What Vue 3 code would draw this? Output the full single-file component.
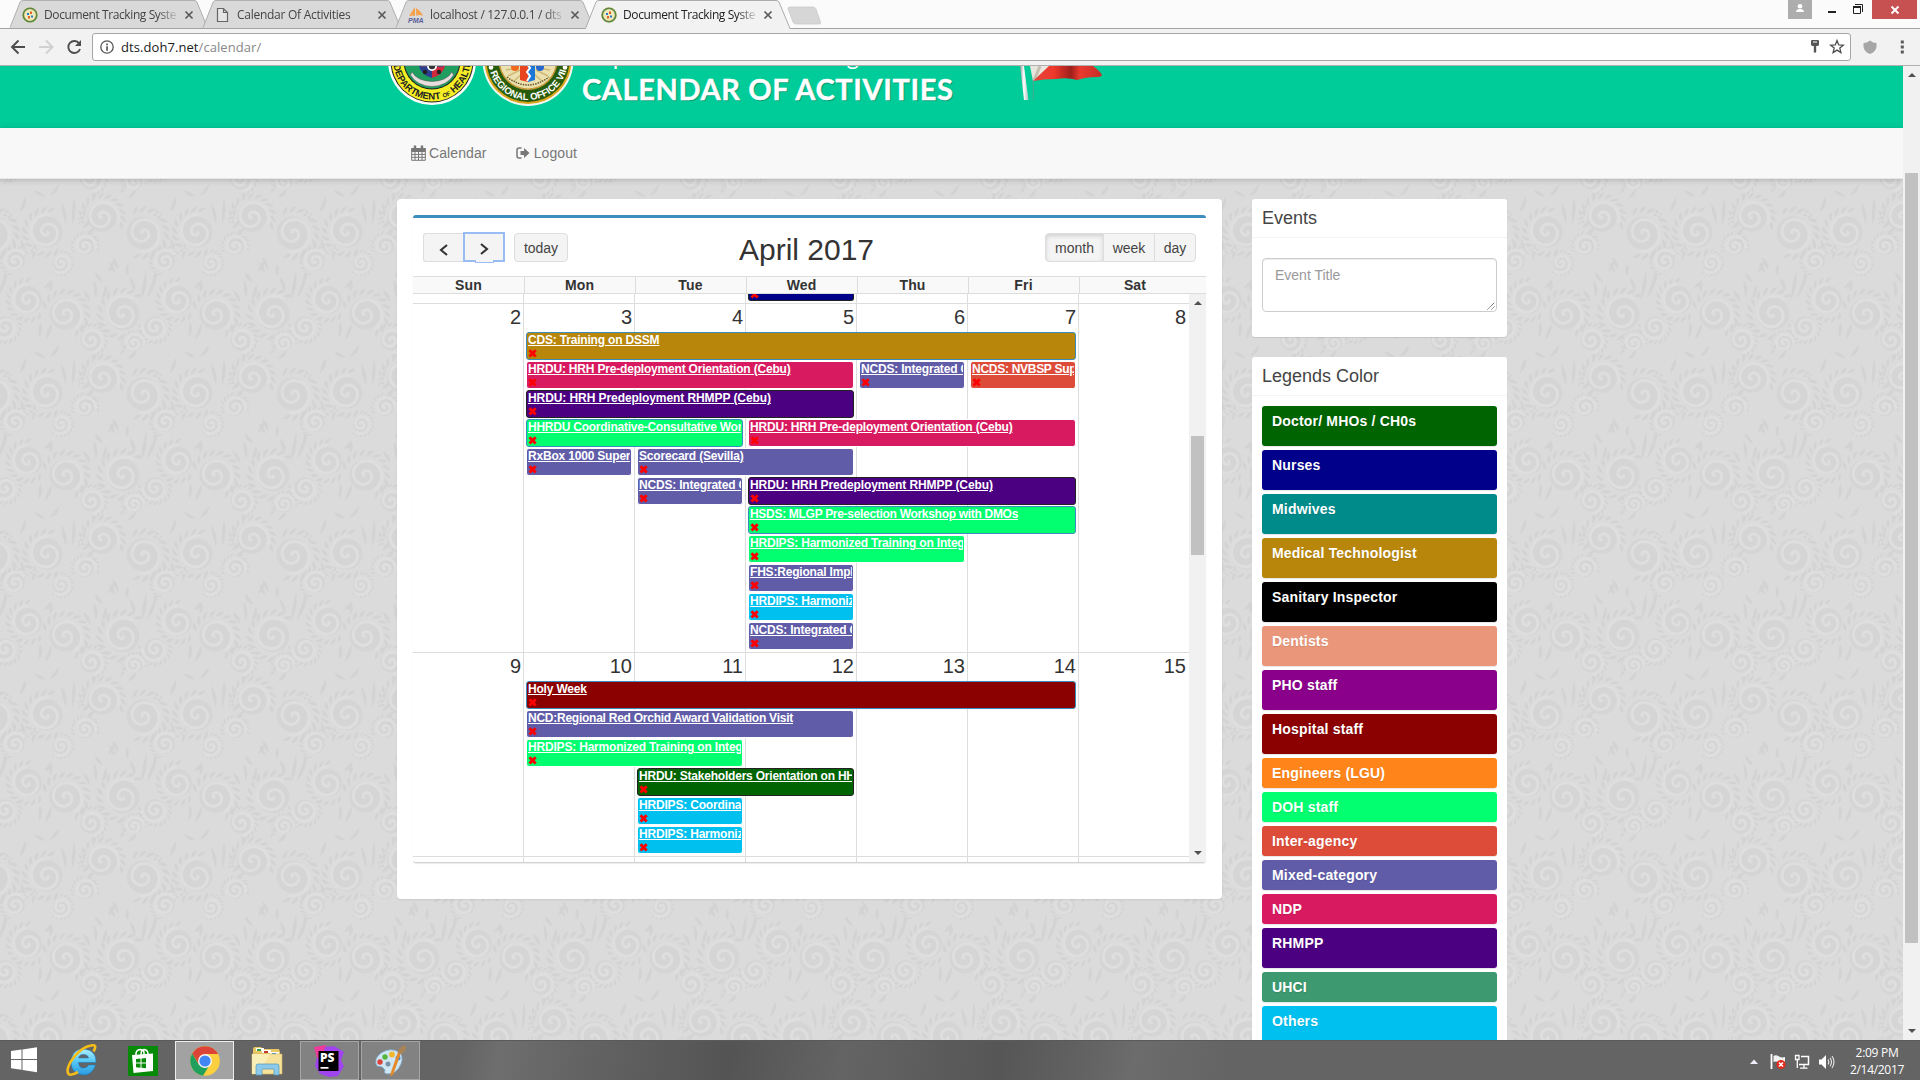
<script setup>
const tabs = [
  { title: 'Document Tracking Syste', icon: 'seal', ls: -0.4 },
  { title: 'Calendar Of Activities', icon: 'page', ls: -0.27 },
  { title: 'localhost / 127.0.0.1 / dts', icon: 'pma', ls: -0.3 },
  { title: 'Document Tracking Syste', icon: 'seal', ls: -0.4, active: true },
]

const days = ['Sun', 'Mon', 'Tue', 'Wed', 'Thu', 'Fri', 'Sat']

const BLUE = '#3c8dbc'
const DARK = '#222222'
const GOLD = '#b8860b'
const PINK = '#d81b60'
const INDIGO = '#4b0082'
const GREEN = '#01ff70'
const PURPLE = '#605ca8'
const RED = '#dd4b39'
const AQUA = '#00c0ef'

// from/to are day columns (0 = Sunday), "to" is exclusive; ls is the title's letter spacing
const weeks = [
  {
    dates: [2, 3, 4, 5, 6, 7, 8],
    height: 348,
    events: [
      { row: 1, from: 1, to: 6, bg: GOLD, border: BLUE, title: 'CDS: Training on DSSM' },
      { row: 2, from: 1, to: 4, bg: PINK, title: 'HRDU: HRH Pre-deployment Orientation (Cebu)' },
      { row: 2, from: 4, to: 5, bg: PURPLE, title: 'NCDS: Integrated C' },
      { row: 2, from: 5, to: 6, bg: RED, title: 'NCDS: NVBSP Sup', ls: -0.28 },
      { row: 3, from: 1, to: 4, bg: INDIGO, border: DARK, title: 'HRDU: HRH Predeployment RHMPP (Cebu)', ls: -0.08 },
      { row: 4, from: 1, to: 3, bg: GREEN, border: BLUE, title: 'HHRDU Coordinative-Consultative Wor', ls: -0.24 },
      { row: 4, from: 3, to: 6, bg: PINK, title: 'HRDU: HRH Pre-deployment Orientation (Cebu)' },
      { row: 5, from: 1, to: 2, bg: PURPLE, title: 'RxBox 1000 Super' },
      { row: 5, from: 2, to: 4, bg: PURPLE, title: 'Scorecard (Sevilla)' },
      { row: 6, from: 2, to: 3, bg: PURPLE, title: 'NCDS: Integrated C' },
      { row: 6, from: 3, to: 6, bg: INDIGO, border: DARK, title: 'HRDU: HRH Predeployment RHMPP (Cebu)', ls: -0.08 },
      { row: 7, from: 3, to: 6, bg: GREEN, border: BLUE, title: 'HSDS: MLGP Pre-selection Workshop with DMOs', ls: -0.3 },
      { row: 8, from: 3, to: 5, bg: GREEN, title: 'HRDIPS: Harmonized Training on Integ' },
      { row: 9, from: 3, to: 4, bg: PURPLE, title: 'FHS:Regional Impl' },
      { row: 10, from: 3, to: 4, bg: AQUA, title: 'HRDIPS: Harmoniz' },
      { row: 11, from: 3, to: 4, bg: PURPLE, title: 'NCDS: Integrated C' },
    ],
  },
  {
    dates: [9, 10, 11, 12, 13, 14, 15],
    height: 203,
    events: [
      { row: 1, from: 1, to: 6, bg: '#8b0000', border: BLUE, title: 'Holy Week' },
      { row: 2, from: 1, to: 4, bg: PURPLE, title: 'NCD:Regional Red Orchid Award Validation Visit', ls: -0.25 },
      { row: 3, from: 1, to: 3, bg: GREEN, title: 'HRDIPS: Harmonized Training on Integ' },
      { row: 4, from: 2, to: 4, bg: '#006400', border: DARK, title: 'HRDU: Stakeholders Orientation on HH', ls: -0.21 },
      { row: 5, from: 2, to: 3, bg: AQUA, title: 'HRDIPS: Coordina' },
      { row: 6, from: 2, to: 3, bg: AQUA, title: 'HRDIPS: Harmoniz' },
    ],
  },
]

const legends = [
  { name: 'Doctor/ MHOs / CH0s', bg: '#006400', tall: true },
  { name: 'Nurses', bg: '#00008b', tall: true },
  { name: 'Midwives', bg: '#008b8b', tall: true },
  { name: 'Medical Technologist', bg: GOLD, tall: true },
  { name: 'Sanitary Inspector', bg: '#000000', tall: true },
  { name: 'Dentists', bg: '#e9967a', tall: true },
  { name: 'PHO staff', bg: '#8b008b', tall: true },
  { name: 'Hospital staff', bg: '#8b0000', tall: true },
  { name: 'Engineers (LGU)', bg: '#ff851b' },
  { name: 'DOH staff', bg: GREEN },
  { name: 'Inter-agency', bg: RED },
  { name: 'Mixed-category', bg: PURPLE },
  { name: 'NDP', bg: PINK },
  { name: 'RHMPP', bg: INDIGO, tall: true },
  { name: 'UHCI', bg: '#3d9970' },
  { name: 'Others', bg: AQUA, tall: true },
]

// ---- wallpaper ornament: one 150x161 tile of spirals and leaves ----
const TW = 150
const TH = 161
const curls = [
  [47, 52, 19, 0.4], [102, 37, 18, 2.2], [143, 53, 20, 3.6], [15, 81, 12, 1.2], [61, 83, 10, 4],
  [28, 120, 17, 0.2], [65, 134, 19, 2.8], [123, 134, 20, 0.9], [91, 160, 13, 3.2], [134, 163, 10, 1.8],
  [5, 147, 13, 5], [85, 66, 11, 2],
]
const f = (n) => n.toFixed(1)
function spiral(x, y, R, a0) {
  let d = ''
  for (let i = 0; i <= 44; i++) {
    const t = i / 44
    const a = a0 + t * Math.PI * 3.4
    const r = 1 + R * t
    d += (i ? 'L' : 'M') + f(x + r * Math.cos(a)) + ' ' + f(y + r * Math.sin(a))
  }
  return d
}
function petal(x, y, R, a) {
  const p = (r, b) => f(x + r * Math.cos(b)) + ' ' + f(y + r * Math.sin(b))
  return `M${p(R, a)}Q${p(R * 1.3, a + 0.04)} ${p(R * 1.36, a + 0.3)}Q${p(R * 1.14, a + 0.3)} ${p(R, a)}Z`
}
function blade(x, y, l, a) {
  const c = Math.cos(a)
  const s = Math.sin(a)
  const ex = x + l * c
  const ey = y + l * s
  const mx = x + (l / 2) * c
  const my = y + (l / 2) * s
  return `M${f(x)} ${f(y)}Q${f(mx - 5 * s)} ${f(my + 5 * c)} ${f(ex)} ${f(ey)}Q${f(mx + 2 * s)} ${f(my - 2 * c)} ${f(x)} ${f(y)}Z`
}
const blades = [
  [72, 45, 28, -1.5], [78, 46, 24, -1.2], [66, 44, 22, -1.8], [84, 62, 15, -0.4], [84, 55, 13, -0.6], [82, 48, 12, -0.8],
  [25, 78, 20, -1.8], [32, 80, 17, -1.4], [20, 32, 16, -1.2], [10, 40, 12, -2], [141, 120, 30, -1.4], [147, 118, 26, -1.2],
  [135, 112, 16, -1.9], [96, 118, 18, -1.7], [102, 120, 16, -1.3], [90, 122, 14, -2.1], [108, 92, 13, -1.1], [118, 90, 14, -2],
  [44, 108, 12, -0.8], [50, 112, 12, -1.5], [3, 105, 16, -1.4], [39, 158, 16, -1.5], [45, 160, 18, -1.2], [110, 82, 12, 1.1],
  [128, 84, 12, 1.6], [95, 92, 13, 0.9], [120, 14, 16, -1.1], [128, 18, 12, -0.8], [34, 10, 13, 0.5], [50, 16, 15, -0.9],
]
const blobs = []
let spiralPath = ''
let leafPath = ''
for (const ox of [-TW, 0, TW]) {
  for (const oy of [-TH, 0, TH]) {
    for (const [x, y, R, a] of curls) {
      const X = x + ox
      const Y = y + oy
      if (X < -35 || X > TW + 35 || Y < -35 || Y > TH + 35) continue
      blobs.push([X, Y, R * 0.82])
      spiralPath += spiral(X, Y, R * 0.9, a)
      for (let k = 0; k < 12; k++) leafPath += petal(X, Y, R, a + 0.6 + k * 0.34)
    }
    for (const [x, y, l, a] of blades) leafPath += blade(x + ox, y + oy, l, a)
  }
}
</script>

<template>
  <div class="screen">
    <!-- browser chrome -->
    <div class="tabstrip">
      <div v-for="(t, i) in tabs" :key="i" class="tab" :class="{ active: t.active }">
        <svg class="tabshape" width="206" height="29" viewBox="0 0 206 29">
          <path d="M0.5 29L11 2Q12 .5 14 .5H191Q193 .5 194 2L205 29Z" />
          <path class="edge" d="M0.5 28.5L11 2Q12 .5 14 .5H191Q193 .5 194 2L205 28.5" />
        </svg>
        <svg v-if="t.icon === 'seal'" class="fav" viewBox="0 0 16 16">
          <circle cx="8" cy="8" r="7.8" fill="#d8d48c" />
          <circle cx="8" cy="8" r="6.8" fill="none" stroke="#5c8548" stroke-width="1.600" />
          <circle cx="8" cy="8" r="5.400" fill="#efe9b8" />
          <path d="M5 6h2v2H5zM9 8.500h2v2H9z" fill="#2a78d0" />
          <path d="M8 4.500h2v2.500H8zM6 9h2v2.500H6z" fill="#e0622a" />
        </svg>
        <svg v-else-if="t.icon === 'page'" class="fav" viewBox="0 0 16 16">
          <path d="M2.5 1.5H8.5L12.5 5.5V14.5H2.5ZM8.5 1.5V5.5H12.5" fill="#e6e6e6" stroke="#666" stroke-width="1.2" />
        </svg>
        <svg v-else class="fav" viewBox="0 0 16 16">
          <path d="M7 0L1 9Q5 8 7 9ZM8 1Q8 6 8.500 9Q11 7 15 9Q13 4 8 1Z" fill="#f5a04a" />
          <text x="0" y="15.800" font-size="7" font-weight="bold" font-style="italic" fill="#5a5f9a" font-family="Liberation Sans, sans-serif">PMA</text>
        </svg>
        <span class="tabtitle" :style="{ letterSpacing: t.ls + 'px' }">{{ t.title }}</span>
        <svg class="tabclose" width="10" height="10" viewBox="0 0 10 10"><path d="M1.500 1.500L8.500 8.500M8.500 1.500L1.500 8.500" stroke="#5a5a5a" stroke-width="1.700" /></svg>
      </div>
      <svg class="newtab" width="36" height="19" viewBox="0 0 36 19"><path d="M4 1H27Q29 1 30 3L34.500 16Q35 18 33 18H10Q8 18 7 16L2 3Q1.500 1 4 1Z" fill="#d6d6d6" stroke="#cacaca" stroke-width=".8" /></svg>
      <div class="winctl">
        <span class="user"><svg width="24" height="19" viewBox="0 0 24 19"><circle cx="12" cy="6.300" r="2.300" fill="#fff" /><path d="M8 12Q8 9 12 9Q16 9 16 12Z" fill="#fff" /></svg></span>
        <svg class="minmax" width="60" height="19" viewBox="0 0 60 19">
          <path d="M16 11h8v2h-8z" fill="#222" />
          <path d="M41.500 6.500h7v7h-7z" fill="none" stroke="#222" /><path d="M41 6h8v2h-8z" fill="#222" /><path d="M43 4.500h7.500V12" fill="none" stroke="#222" />
        </svg>
        <span class="close"><svg width="10" height="10" viewBox="0 0 10 10"><path d="M1.500 1.500L8.500 8.500M8.500 1.500L1.500 8.500" stroke="#fff" stroke-width="1.900" /></svg></span>
      </div>
    </div>
    <div class="toolbar">
      <svg class="navicons" width="92" height="36" viewBox="0 0 92 36" fill="none" stroke-width="1.900">
        <path d="M25 18H12M18.500 11.500L12 18L18.500 24.500" stroke="#4d4d4d" />
        <path d="M39 18H52M46 11.500L52.500 18L46 24.500" stroke="#d0d0d0" />
        <path d="M79.200 14.500A6 6 0 1 0 80 20" stroke="#4d4d4d" />
        <path d="M81 11V17H75Z" fill="#4d4d4d" />
      </svg>
      <div class="omnibox">
        <svg width="16" height="16" viewBox="0 0 16 16"><circle cx="8" cy="8" r="6.200" fill="none" stroke="#555" stroke-width="1.300" /><path d="M7.200 4.500h1.700v1.700H7.200zM7.200 7.200h1.700v4.500H7.200z" fill="#555" /></svg>
        <span class="url">dts.doh7.net<i>/calendar/</i></span>
        <svg class="omniright" width="40" height="18" viewBox="0 0 40 18">
          <path d="M2 3Q2 2 3 2H9Q10 2 10 3V6.500Q10 8 8 8H7.200V14L6 15L4.800 14V8H4Q2 8 2 6.500Z" fill="#555" /><path d="M4 3.500h4v1H4z" fill="#fff" />
          <path d="M28 2.600L29.700 6.900L34.300 7.200L30.800 10.100L31.900 14.600L28 12.100L24.100 14.600L25.200 10.100L21.700 7.200L26.300 6.900Z" fill="none" stroke="#4d4d4d" stroke-width="1.300" />
        </svg>
      </div>
      <svg width="69" height="36" viewBox="0 0 69 36">
        <path d="M19 11.500Q16 14 12.500 14V18Q13 22.500 19 25Q25 22.500 25.500 18V14Q22 14 19 11.500Z" fill="#a6a6a6" />
        <path d="M49.800 11.500h3v3h-3zM49.800 16.500h3v3h-3zM49.800 21.500h3v3h-3z" fill="#5a5a5a" />
      </svg>
    </div>

    <!-- page -->
    <div class="viewport">
      <div class="page">
        <svg class="wallpaper" width="1903" height="974">
          <defs>
            <pattern id="orn" x="0" y="114" width="150" height="161" patternUnits="userSpaceOnUse">
              <circle v-for="(b, i) in blobs" :key="i" :cx="b[0]" :cy="b[1]" :r="b[2]" fill="#d2d2d2" opacity=".75" />
              <path :d="leafPath" fill="#d0d0d0" opacity=".75" />
              <path :d="spiralPath" fill="none" stroke="#dedede" stroke-width="3" stroke-linecap="round" />
            </pattern>
          </defs>
          <rect width="1903" height="974" fill="#dbdbdb" />
          <rect width="1903" height="974" fill="url(#orn)" />
        </svg>

        <header class="banner">
          <svg class="seals" width="194" height="62" viewBox="386 66 194 62">
            <defs>
              <path id="arcA" d="M393.500 61A38.500 38.500 0 0 0 470.500 61" />
              <path id="arcB" d="M488.500 60.500A39.500 39.500 0 0 0 567.500 60.500" />
            </defs>
            <circle cx="432" cy="61" r="44" fill="#fff" />
            <circle cx="432" cy="61" r="41.500" fill="#222" />
            <circle cx="432" cy="61" r="40.500" fill="#f6ee25" />
            <circle cx="432" cy="61" r="28.500" fill="#222" />
            <circle cx="432" cy="61" r="27.500" fill="#1f9e60" />
            <path d="M419 60H432V78Q421 75 419 66Z" fill="#2a3f8f" />
            <path d="M432 60H445V66Q443 75 432 78Z" fill="#cf2a3c" />
            <path d="M421 60H443V67H421Z" fill="#5a4a7a" />
            <circle cx="432" cy="66" r="5" fill="#fff" /><circle cx="432" cy="66" r="3.200" fill="#333" />
            <circle cx="425" cy="72" r="2.200" fill="#222" /><circle cx="439" cy="72" r="2.200" fill="#222" />
            <path d="M412 72Q417 81 432 81.500Q447 81 452 72L453.500 75Q447 86 432 86.500Q417 86 410.500 75Z" fill="#e8dede" stroke="#555" stroke-width=".5" />
            <text class="sealtext" font-size="9.500" fill="#222"><textPath href="#arcA" startOffset="4">DEPARTMENT <tspan font-size="6">OF</tspan> HEALTH</textPath></text>

            <circle cx="528" cy="60.500" r="45.500" fill="#f2f7f2" />
            <circle cx="528" cy="60.500" r="43.500" fill="#d8a51c" />
            <circle cx="528" cy="60.500" r="41.500" fill="#275c0a" />
            <circle cx="528" cy="60.500" r="29.500" fill="#c49a3c" />
            <circle cx="528" cy="60.500" r="28" fill="#ece0ae" />
            <path d="M506 70L518 68M508 76L520 70M514 81L522 74M550 70L538 68M548 76L536 70M542 81L534 74" stroke="#cdb878" stroke-width="1.500" />
            <circle cx="515" cy="67" r="4" fill="#f26a20" /><circle cx="540" cy="67" r="4" fill="#2467cf" />
            <path d="M520 60H528V82L520 80Z" fill="#e8441e" /><path d="M528 60H535V80L528 82Z" fill="#1c78d8" />
            <path d="M527 64l3 4l-3 4l3 4l-3 5" fill="none" stroke="#fff" stroke-width="2" />
            <path d="M507 77Q528 93 549 77" fill="none" stroke="#6a5a30" stroke-width="1.500" stroke-dasharray="1.500 1" />
            <circle cx="491" cy="67.500" r="2.300" fill="#fff" /><circle cx="565" cy="67.500" r="2.300" fill="#fff" />
            <text class="sealtext" font-size="9.500" fill="#fff"><textPath href="#arcB" startOffset="12">REGIONAL OFFICE VII</textPath></text>
          </svg>
          <div class="bantext">
            <span class="dept">Department of Health Regional Office VII</span>
            <span class="cal">CALENDAR OF ACTIVITIES</span>
          </div>
          <svg class="flag" width="90" height="36" viewBox="0 0 90 36">
            <defs>
              <linearGradient id="pole" x1="0" x2="1"><stop offset="0" stop-color="#8b9a98" /><stop offset=".45" stop-color="#fff" /><stop offset="1" stop-color="#a8bdb8" /></linearGradient>
              <linearGradient id="cloth" x1="0" x2="1"><stop offset="0" stop-color="#e2463c" /><stop offset=".3" stop-color="#f0382c" /><stop offset=".55" stop-color="#9e1f1a" /><stop offset=".68" stop-color="#ea3a2e" /><stop offset="1" stop-color="#c22f28" /></linearGradient>
            </defs>
            <path d="M7 0H11L15.500 34H11Z" fill="url(#pole)" transform="translate(-7 0)" />
            <path d="M11 0L13 15Q14 25 13 34" fill="none" stroke="#3fae90" stroke-width="1.200" />
            <path d="M10 0H31L13 15Z" fill="#e9e6e0" />
            <path d="M20 0Q17 8 14 14" fill="none" stroke="#c4bfae" stroke-width="3" />
            <path d="M29 0H73Q80 5 82 9Q81 11 77 11Q66 11 57 14Q48 11 36 13Q24 13 13 15Z" fill="url(#cloth)" />
          </svg>
        </header>

        <nav class="menu">
          <svg width="15" height="16" viewBox="0 0 15 16" fill="none" stroke="#777"><path d="M.7 3.500H14.300V15.300H.7ZM.7 6.500H14.300M.7 9.400H14.300M.7 12.300H14.300M4 6.500V15M7.500 6.500V15M11 6.500V15" stroke-width="1" /><path d="M.5 3h14v3h-14z" fill="#777" stroke="none" /><path d="M4 .5V4M11 .5V4" stroke-width="2.400" /></svg>
          <span class="m1">Calendar</span>
          <svg width="14" height="12" viewBox="0 0 14 12"><path d="M5.500 1H3Q1 1 1 3V9Q1 11 3 11H5.500" fill="none" stroke="#777" stroke-width="1.500" /><path d="M4.500 4H8V1L13.500 6L8 11V8H4.500Z" fill="#777" /></svg>
          <span class="m2">Logout</span>
        </nav>

        <main class="content">
          <section class="panel">
            <div class="calbox">
              <div class="calhead">
                <div class="group nav">
                  <span class="btn prev"><svg width="10" height="12" viewBox="0 0 10 12"><path d="M8 1L2 6L8 11" fill="none" stroke="#333" stroke-width="2.100" /></svg></span>
                  <span class="btn next"><svg width="10" height="12" viewBox="0 0 10 12"><path d="M2 1L8 6L2 11" fill="none" stroke="#333" stroke-width="2.100" /></svg><i class="notch"></i></span>
                  <span class="btn today">today</span>
                </div>
                <h2>April 2017</h2>
                <div class="group views">
                  <span class="btn month">month</span><span class="btn week">week</span><span class="btn day">day</span>
                </div>
              </div>
              <div class="dayhead"><span v-for="d in days" :key="d">{{ d }}</span></div>
              <div class="calbody">
                <div class="weeks">
                  <div class="wk tail"><div class="evt tailevt"><svg class="x" width="10" height="9" viewBox="0 0 10 9"><path d="M1.500 1.200L7.700 7.500M7.700 1.200L1.500 7.500" stroke="#f00" stroke-width="2.900" /></svg></div></div>
                  <div v-for="(w, wi) in weeks" :key="wi" class="wk" :style="{ height: w.height + 'px' }">
                    <div class="dates"><span v-for="d in w.dates" :key="d">{{ d }}</span></div>
                    <div class="events">
                      <div
                        v-for="(e, ei) in w.events"
                        :key="ei"
                        class="evt"
                        :style="{ gridRow: e.row, gridColumn: `${e.from + 1} / ${e.to + 1}`, background: e.bg, borderColor: e.border || '#fff' }"
                      >
                        <a :style="{ letterSpacing: (e.ls ?? -0.19) + 'px' }">{{ e.title }}</a>
                        <svg class="x" width="10" height="9" viewBox="0 0 10 9"><path d="M1.500 1.200L7.700 7.500M7.700 1.200L1.500 7.500" stroke="#f00" stroke-width="2.900" /></svg>
                      </div>
                    </div>
                  </div>
                  <div class="wk last"></div>
                </div>
                <div class="sbar inner">
                  <i class="up"></i><b></b><i class="down"></i>
                </div>
              </div>
            </div>
          </section>

          <aside class="side">
            <section class="card ev">
              <h3>Events</h3>
              <div class="ta">Event Title
                <svg width="8" height="8" viewBox="0 0 8 8"><path d="M.5 7.500L7.500 .5M4.500 7.500L7.500 4.500" stroke="#555" stroke-width="1" stroke-dasharray="1.200 .4" /></svg>
              </div>
            </section>
            <section class="card lg">
              <h3>Legends Color</h3>
              <div class="legend">
                <div v-for="l in legends" :key="l.name" class="li" :class="{ tall: l.tall }" :style="{ background: l.bg }">{{ l.name }}</div>
              </div>
            </section>
          </aside>
        </main>
      </div>
      <div class="sbar outer"><i class="up"></i><b></b><i class="down"></i></div>
    </div>

    <!-- taskbar -->
    <footer class="taskbar">
      <svg class="ti start" width="28" height="28" viewBox="0 0 28 28"><path d="M1 4L11.500 2.500V12H1ZM12.500 2.400L27 .3V12H12.500ZM1 13H11.500V22.700L1 21.200ZM12.500 13H27V25.200L12.500 23Z" fill="#fff" /></svg>
      <svg class="ti ie" width="34" height="34" viewBox="0 0 34 34">
        <defs><linearGradient id="ieb" x1="0" y1="0" x2="0" y2="1"><stop offset="0" stop-color="#aef0ff" /><stop offset=".5" stop-color="#52c6f5" /><stop offset="1" stop-color="#2a9ae0" /></linearGradient></defs>
        <path d="M31 18.500H13.500Q14 24 18.500 24Q22 24 23.500 21H30.500Q27.500 31 18 31Q6 29.500 6 18Q7 5 18.500 5Q31.500 6 31 18.500ZM13.700 14H23.500Q23 10.500 18.500 10.500Q14 10.500 13.700 14Z" fill="url(#ieb)" stroke="#1e78b8" stroke-width=".6" />
        <path d="M28.500 7.500Q33 0 26 1.500Q17 3 9 13Q0 25 3.500 30Q6 32 13 28" fill="none" stroke="#f4bd18" stroke-width="2.600" />
      </svg>
      <svg class="ti store" width="30" height="30" viewBox="0 0 30 30"><path d="M0 0h30v30H0z" fill="#078a07" /><path d="M4 9L25 7.500V25L5.500 27Z" fill="#fff" /><path d="M8 10V7Q9 3.500 12.500 3.500Q16 4 16 7V10M13 9Q13 3.500 16 3.500Q20 4 20 8" fill="none" stroke="#fff" stroke-width="1.500" /><path d="M8 13L12.500 12.600V16.500H8ZM13.500 12.500L18 12V16.500H13.500ZM8 17.500H12.500V21.700L8 21.300ZM13.500 17.500H18V22.200L13.500 21.800Z" fill="#078a07" /></svg>
      <span class="tb on">
        <svg width="30" height="30" viewBox="0 0 30 30"><circle cx="15" cy="15" r="14.800" fill="#fccf3e" /><path d="M15 8H28A14.800 14.800 0 0 0 2.200 7.600L9 18.500Z" fill="#db4437" /><path d="M15 15L8.700 18.500L2.200 7.600A14.800 14.800 0 0 0 13 29.700L19.500 19Z" fill="#1fa15d" /><circle cx="15" cy="15" r="7" fill="#f4f4f4" /><circle cx="15" cy="15" r="5.600" fill="#4285f4" /></svg>
      </span>
      <svg class="ti files" width="34" height="32" viewBox="0 0 34 32">
        <path d="M3 4Q3 2 5 2H11L13 4H29L30 7V28H3Z" fill="#e8c765" /><path d="M6 3h8v3H6z" fill="#fff" /><path d="M7 4h4v2H7z" fill="#3a9a40" /><path d="M12 5h9v3h-9z" fill="#fff" /><path d="M14 6h4v2h-4z" fill="#c0392b" /><path d="M20 7h9v3h-9z" fill="#fff" /><path d="M22 8h4v2h-4z" fill="#2a86d0" />
        <path d="M2 9H32V29H2Z" fill="#f6e29a" stroke="#d8b85a" stroke-width=".6" /><path d="M2 9L20 9L8 29H2Z" fill="#fcf3c4" opacity=".7" />
        <path d="M6 30V21Q6 19 8 19H27Q29 19 29 21V30H24V25Q24 24 23 24H13Q12 24 12 25V30Z" fill="#8cc9ea" stroke="#4d95bd" stroke-width=".7" />
      </svg>
      <span class="tb ps">
        <svg width="34" height="34" viewBox="0 0 34 34"><path d="M12 3L22 2L32 8L29 16L32 22L26 32L17 33L8 30L3 22L5 13Z" fill="#a044f0" /><path d="M2 3L14 1L10 12L5 14Z" fill="#ee3a9a" /><path d="M6.500 7h20v20h-20z" fill="#000" /><text x="8" y="17.800" font-family="Open Sans, sans-serif" font-size="12" font-weight="800" fill="#fff">PS</text><path d="M8.500 23h8v1.700h-8z" fill="#fff" /></svg>
      </span>
      <span class="tb pt">
        <svg width="34" height="34" viewBox="0 0 34 34"><path d="M4 22Q0 15 8 9Q17 3 26 8Q31 12 28 20Q24 30 14 30Q10 29 12 26Q10 22 4 22Z" fill="#cfe6f5" stroke="#7ba9c8" stroke-width=".8" /><circle cx="7" cy="18" r="2.700" fill="#dd4238" /><circle cx="12" cy="13" r="2.700" fill="#58b53c" /><circle cx="19" cy="10.500" r="2.900" fill="#f4b72c" /><circle cx="25" cy="14" r="2.500" fill="#3a8bd8" /><circle cx="15" cy="20" r="2.500" fill="#7a92a4" /><path d="M28 9L20 31L17 32L18 28L25 8Z" fill="#e58a2a" /><path d="M25 9Q24 4 32 1Q35 5 29 10Z" fill="#a98358" /></svg>
      </span>
      <div class="tray">
        <svg width="100" height="20" viewBox="1745 1050 100 20">
          <path d="M1754 1058.500L1758 1063H1750Z" fill="#eef" />
          <path d="M1771.500 1053V1068" stroke="#fff" stroke-width="1.800" /><path d="M1773.500 1055Q1776 1053.500 1779 1055.500Q1782 1057 1785 1056V1062Q1781 1063 1779 1061.500Q1776 1060 1773.500 1061Z" fill="#f2f2f2" />
          <circle cx="1781" cy="1063.500" r="4.600" fill="#e02b1d" /><path d="M1779 1061.500l4 4m0 -4l-4 4" stroke="#fff" stroke-width="1.500" />
          <path d="M1801 1055.500H1808.500V1063.500H1799" fill="none" stroke="#fff" stroke-width="1.500" /><path d="M1795.500 1054.500h3.500v4h-3.500zM1797.300 1058.500V1067M1800 1067.200H1807.500M1804 1064V1067" fill="none" stroke="#fff" stroke-width="1.300" />
          <path d="M1819 1058.500H1821.500L1826 1054V1068L1821.500 1063.500H1819Z" fill="#fff" /><path d="M1828 1058.500Q1829.700 1061 1828 1063.500M1830 1056.700Q1833 1061 1830 1065.300M1832 1055Q1836 1061 1832 1067" fill="none" stroke="#e8e8e8" stroke-width="1.100" />
        </svg>
        <div class="clock"><span>2:09 PM</span><span>2/14/2017</span></div>
      </div>
    </footer>
  </div>
</template>

<style>
body { margin: 0; overflow: hidden; }
</style>

<style scoped>
* { box-sizing: border-box; }
svg { display: block; flex: none; }
.screen { width: 1920px; height: 1080px; display: flex; flex-direction: column; overflow: hidden; font-family: "Liberation Sans", Arial, sans-serif; font-size: 14px; color: #333; }

.tabstrip { height: 29px; flex: none; display: flex; background: #fbfbfb; border-bottom: 1px solid #a3a3a3; padding-left: 6px; font-family: "Open Sans", "Noto Sans", sans-serif; font-size: 12px; }
.tab { position: relative; width: 193px; height: 29px; flex: none; display: flex; align-items: center; padding: 0 0 0 16px; color: #444; }
.tab.active { color: #222; z-index: 2; }
.tabshape { position: absolute; left: 0; top: 0; fill: #d9d9d9; }
.tabshape .edge { fill: none; stroke: #acacac; }
.tab:not(.active) .tabshape { height: 28px; }
.active .tabshape { fill: #f2f2f2; }
.fav { position: relative; width: 16px; height: 16px; margin-right: 6px; margin-top: 1px; }
.tabtitle { position: relative; width: 134px; white-space: nowrap; -webkit-mask-image: linear-gradient(90deg, #000 114px, transparent 136px); mask-image: linear-gradient(90deg, #000 114px, transparent 136px); }
.tabclose { position: relative; margin-left: 6px; margin-top: 1px; }
.newtab { margin: 6px 0 0 8px; }
.winctl { margin-left: auto; display: flex; align-items: flex-start; padding-right: 3px; }
.user { background: #adadad; height: 19px; }
.close { width: 45px; height: 19px; background: #c75050; display: flex; align-items: center; justify-content: center; }

.toolbar { height: 37px; flex: none; background: #f2f2f2; border-bottom: 1px solid #b0b0b0; display: flex; align-items: center; }
.omnibox { flex: 1; height: 28px; border: 1px solid #a6a6a6; border-radius: 3px; background: #fff; display: flex; align-items: center; padding: 0 1px 0 6px; }
.url { font-family: "Open Sans", "Noto Sans", sans-serif; font-size: 13px; color: #1a1a1a; margin-left: 6px; letter-spacing: .07px; line-height: 18px; }
.url i { font-style: normal; color: #888; }
.omniright { margin-left: auto; }

.viewport { height: 974px; flex: none; display: flex; overflow: hidden; }
.page { position: relative; width: 1903px; display: flex; flex-direction: column; overflow: hidden; }
.wallpaper { position: absolute; left: 0; top: 0; }
.banner { position: relative; height: 62px; flex: none; background: #00cc99; display: flex; padding-left: 386px; overflow: hidden; }
.sealtext { font-family: "Liberation Sans", sans-serif; font-weight: bold; }
.bantext { width: 440px; margin-top: -26px; display: flex; flex-direction: column; color: #fff; font-family: Lato, sans-serif; white-space: nowrap; padding-left: 2px; }
.dept { font-size: 24px; line-height: 32px; letter-spacing: 0; }
.cal { font-size: 29px; font-weight: 700; line-height: 34px; letter-spacing: .62px; -webkit-text-stroke: .4px #fff; text-shadow: 1px 1px 1px rgba(0, 0, 0, .3); }
.menu { position: relative; height: 51px; flex: none; background: #f8f8f8; border-bottom: 1px solid #e7e7e7; box-shadow: 0 1px 6px rgba(0, 0, 0, .2); display: flex; align-items: center; padding-left: 411px; color: #777; letter-spacing: .1px; }
.m1 { margin: 0 29px 0 3px; }
.m2 { margin-left: 4px; }

.content { position: relative; display: flex; align-items: flex-start; padding: 20px 0 0 397px; gap: 30px; }
.panel { width: 825px; height: 700px; flex: none; background: #fff; border-radius: 4px; padding: 16px; box-shadow: 0 1px 2px rgba(0, 0, 0, .08); }
.calbox { height: 648px; border-top: 3px solid #3c8dbc; border-radius: 3px; border-bottom: 1px solid #d2d2d2; display: flex; flex-direction: column; box-shadow: 0 1px 1px rgba(0, 0, 0, .08); }
.calhead { height: 58px; flex: none; display: flex; justify-content: space-between; padding: 15px 10px 0; }
.group { display: flex; }
.btn { height: 29px; border: 1px solid #ddd; background: #f4f4f4; color: #444; font-size: 14px; line-height: 27px; display: flex; justify-content: center; align-items: center; padding-top: 1px; }
.prev { width: 40px; border-radius: 3px 0 0 3px; border-right: 0; padding: 4px 0 0; }
.next { position: relative; width: 42px; height: 30px; margin-top: -1px; border: 2px solid #9abcf5; padding-top: 4px; }
.notch { position: absolute; left: 10px; bottom: -3px; width: 19px; height: 3px; background: #f4f4f4; border: 1px solid #9abcf5; border-top: 0; }
.today { width: 54px; margin-left: 9px; border-radius: 4px; }
.month { width: 59px; border-radius: 4px 0 0 4px; box-shadow: inset 0 2px 4px rgba(0, 0, 0, .15); }
.week { width: 50px; border-width: 1px 0; }
.day { width: 42px; border-radius: 0 4px 4px 0; border-left: 1px solid #ddd; }
h2 { margin: 0; font-size: 30px; font-weight: normal; line-height: 34px; color: #333; }
.nav { width: 220px; }
.views { width: 226px; justify-content: flex-end; }
.dayhead { height: 18px; flex: none; display: grid; grid-template-columns: repeat(7, 111px); border-top: 1px solid #ddd; border-bottom: 1px solid #ddd; background: #f9f9f9; text-align: center; font-weight: bold; font-size: 14px; line-height: 17px; overflow: hidden; }
.dayhead span { border-right: 1px solid #ddd; width: 112px; letter-spacing: .15px; }
.dayhead span:last-child { border: 0; }
.calbody { flex: 1; display: flex; overflow: hidden; min-height: 0; }
.weeks { width: 776px; flex: none; background: repeating-linear-gradient(90deg, transparent 0 110px, #ddd 110px 111px) 0 0 / 776px 100%; }
.wk { box-sizing: content-box; border-bottom: 1px solid #ddd; display: flex; flex-direction: column; }
.tail { height: 9px; }
.tail .tailevt { width: 106px; height: 7px; margin-left: 335px; margin-top: 0; background: #00008b; border-color: #222; border-top: 0; border-radius: 0 0 3px 3px; }
.tailevt .x { margin-top: -4px; }
.last { border: 0; height: 5px; }
.dates { display: grid; grid-template-columns: repeat(6, 111px) 110px; height: 28px; font-size: 20px; line-height: 26px; text-align: right; }
.dates span { padding-right: 3px; }
.events { display: grid; grid-template-columns: repeat(6, 111px) 110px; grid-auto-rows: 28px; row-gap: 1px; }
.evt { margin: 0 3px 0 2px; border: 1px solid #fff; border-radius: 3px; overflow: hidden; padding: 0 1px; font-size: 12px; min-width: 0; }
.evt a { display: block; color: #fff; font-weight: bold; text-decoration: underline; white-space: nowrap; overflow: hidden; line-height: 15px; height: 16px; }

.sbar { background: #f1f1f1; display: flex; flex-direction: column; align-items: center; width: 17px; flex: none; }
.sbar i { border: 4px solid transparent; width: 0; height: 0; }
.sbar .up { border-bottom-color: #505050; border-top: 0; }
.sbar .down { border-top-color: #505050; border-bottom: 0; margin-top: auto; }
.sbar b { width: 13px; background: #c1c1c1; }
.inner { padding: 7px 0 7px; }
.inner b { height: 119px; margin-top: 131px; }
.outer { padding: 7px 0; }
.outer b { height: 770px; margin-top: 96px; }

.side { width: 255px; display: flex; flex-direction: column; gap: 20px; }
.card { background: #fff; border-radius: 3px; box-shadow: 0 1px 1px rgba(0, 0, 0, .1); }
.ev { height: 138px; }
.lg { height: 720px; }
h3 { margin: 0; height: 39px; font-size: 18px; font-weight: normal; color: #444; line-height: 38px; padding-left: 10px; border-bottom: 1px solid #f4f4f4; }
.ta { position: relative; margin: 20px 10px 0; height: 54px; border: 1px solid #ccc; border-radius: 4px; box-shadow: inset 0 1px 1px rgba(0, 0, 0, .075); color: #999; padding: 6px 12px; line-height: 20px; }
.ta svg { position: absolute; right: 1px; bottom: 1px; }
.legend { padding: 10px 10px 0; display: flex; flex-direction: column; gap: 4px; }
.li { height: 30px; flex: none; border-radius: 3px; color: #fff; font-weight: bold; font-size: 14px; line-height: 20px; padding: 5px 10px; letter-spacing: .18px; text-shadow: 0 1px 1px rgba(0, 0, 0, .1); box-shadow: 0 1px 1px rgba(0, 0, 0, .1); }
.li.tall { height: 40px; }

.taskbar { height: 40px; flex: none; display: flex; align-items: center; background: linear-gradient(100deg, transparent 24%, rgba(140, 140, 140, .25) 26%, transparent 30%, rgba(60, 60, 60, .4) 38%, transparent 44%, rgba(60, 60, 60, .35) 52%, transparent 57%, rgba(140, 140, 140, .2) 59%, transparent 64%), #646464; border-top: 1px solid #5a5a5a; }
.start { margin-left: 10px; }
.ie { margin-left: 27px; }
.store { margin-left: 29px; }
.files { margin: 0 16px 0 16px; }
.tb { width: 59px; height: 39px; border: 1px solid #a5a5a5; background: #828282; display: flex; align-items: center; justify-content: center; }
.tb.on { margin-left: 17px; background: #a2a2a2; border-color: #eee; }
.ps { padding-right: 1px; }
.pt { margin-left: 2px; padding-right: 1px; }
.tray { margin-left: auto; display: flex; align-items: center; color: #fff; font-family: "Open Sans", "Noto Sans", sans-serif; font-size: 12px; }
.clock { width: 75px; display: flex; flex-direction: column; align-items: center; line-height: 17px; letter-spacing: -0.3px; padding-right: 11px; }
</style>
